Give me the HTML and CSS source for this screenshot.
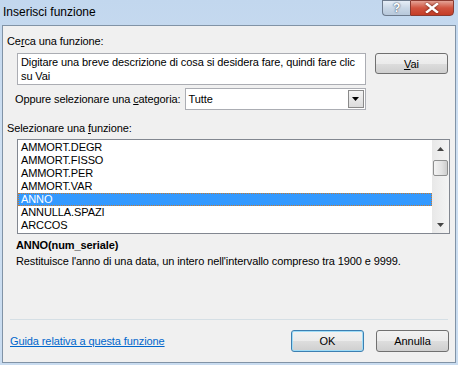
FILE: index.html
```html
<!DOCTYPE html>
<html lang="it">
<head>
    <meta charset="UTF-8">
    <title>Inserisci funzione</title>
    <link rel="stylesheet" href="styles.css">
</head>
<body>
    <div class="window">
        <div class="titlebar">
            <div class="title">Inserisci funzione</div>
            <div class="caption-buttons">
                <div class="cap-btn help">?</div>
                <div class="cap-btn close">
                    <svg width="14" height="10" viewBox="0 0 14 10">
                        <path d="M2 1 L12 9 M12 1 L2 9" stroke="#fff" stroke-width="2.4" stroke-linecap="square"/>
                    </svg>
                </div>
            </div>
        </div>

        <div class="panel">
            <div class="label">Ce<u>r</u>ca una funzione:</div>
            <div class="search-row">
                <div class="textbox">Digitare una breve descrizione di cosa si desidera fare, quindi fare clic su Vai</div>
                <button class="button vai"><u>V</u>ai</button>
            </div>

            <div class="category-row">
                <span class="cat-label">Oppure selezionare una <u>c</u>ategoria:</span>
                <div class="select">
                    <span class="select-value">Tutte</span>
                    <span class="select-arrow">
                        <svg width="7" height="4" viewBox="0 0 7 4"><path d="M0 0 H7 L3.5 4 Z" fill="#000"/></svg>
                    </span>
                </div>
            </div>

            <div class="label fn-label">Selezionare una <u>f</u>unzione:</div>
            <div class="listbox">
                <div class="items">
                    <div class="item">AMMORT.DEGR</div>
                    <div class="item">AMMORT.FISSO</div>
                    <div class="item">AMMORT.PER</div>
                    <div class="item">AMMORT.VAR</div>
                    <div class="item selected">ANNO</div>
                    <div class="item">ANNULLA.SPAZI</div>
                    <div class="item">ARCCOS</div>
                </div>
                <div class="scrollbar">
                    <div class="sb-arrow">
                        <svg width="7" height="4" viewBox="0 0 7 4"><path d="M0 4 H7 L3.5 0 Z" fill="#444"/></svg>
                    </div>
                    <div class="sb-track">
                        <div class="sb-thumb"></div>
                    </div>
                    <div class="sb-arrow">
                        <svg width="7" height="4" viewBox="0 0 7 4"><path d="M0 0 H7 L3.5 4 Z" fill="#444"/></svg>
                    </div>
                </div>
            </div>

            <div class="signature">ANNO(num_seriale)</div>
            <div class="description">Restituisce l'anno di una data, un intero nell'intervallo compreso tra 1900 e 9999.</div>

            <div class="separator"></div>
            <div class="footer">
                <a href="#" class="help-link">Guida relativa a questa funzione</a>
                <div class="footer-buttons">
                    <button class="button ok">OK</button>
                    <button class="button">Annulla</button>
                </div>
            </div>
        </div>
    </div>
</body>
</html>
```

FILE: styles.css
```css
body {
    margin: 0;
    font-family: "Liberation Sans", Arial, sans-serif;
    font-size: 11px;
    letter-spacing: -0.1px;
    color: #000000;
}
.window {
    width: 458px;
    height: 365px;
    display: flex;
    flex-direction: column;
    background: linear-gradient(to bottom, #c2d7ee, #cfe0f2 40%, #c9dcf0);
    box-sizing: border-box;
}
.titlebar {
    height: 25px;
    display: flex;
    justify-content: space-between;
    align-items: flex-start;
}
.title {
    font-size: 12px;
    letter-spacing: 0;
    padding-left: 3px;
    margin-top: 5px;
    color: #000000;
}
.caption-buttons {
    display: flex;
    margin-right: 4px;
}
.cap-btn {
    height: 16px;
    box-sizing: border-box;
    border: 1px solid #6d7b8d;
    display: flex;
    align-items: center;
    justify-content: center;
}
.help {
    width: 28px;
    border-right: none;
    border-radius: 0 0 0 4px;
    background: linear-gradient(to bottom, #e6eef7, #c9d7e6 50%, #b7c8db);
    color: #ffffff;
    font-weight: bold;
    font-size: 12px;
    text-shadow: 0 0 2px #4a5a70, 0 0 1px #4a5a70;
}
.close {
    width: 44px;
    border-radius: 0 0 4px 0;
    border-color: #8a3a30;
    background: linear-gradient(to bottom, #e4a396, #d0533f 50%, #c43d27);
}
.close svg {
    filter: drop-shadow(0 0 1px #5a1a10);
}
.panel {
    flex: 1;
    margin: 0 2px 2px 2px;
    border: 1px solid #8193a6;
    background-color: #f0f0f0;
    padding: 0 5px 0 4px;
    display: flex;
    flex-direction: column;
}
.label {
    margin-top: 8px;
    height: 14px;
    line-height: 14px;
}
.search-row {
    display: flex;
    align-items: flex-start;
    margin-top: 5px;
    padding-left: 10px;
}
.textbox {
    width: 349px;
    height: 32px;
    box-sizing: border-box;
    border: 1px solid #abadb3;
    background-color: #ffffff;
    padding: 1px 3px;
    line-height: 14px;
}
.button {
    font-family: "Liberation Sans", Arial, sans-serif;
    font-size: 11px;
    width: 73px;
    height: 22px;
    border: 1px solid #707070;
    border-radius: 3px;
    background: linear-gradient(to bottom, #f2f2f2, #ebebeb 50%, #dddddd 51%, #cfcfcf);
    padding: 0;
    color: #000000;
}
.vai {
    margin-left: 9px;
    height: 21px;
}
.category-row {
    display: flex;
    align-items: center;
    margin-top: 3px;
    padding-left: 8px;
}
.cat-label {
    margin-right: 4px;
}
.select {
    width: 181px;
    height: 22px;
    box-sizing: border-box;
    border: 1px solid #abadb3;
    background-color: #ffffff;
    display: flex;
    align-items: center;
    justify-content: space-between;
}
.select-value {
    padding-left: 3px;
}
.select-arrow {
    width: 16px;
    height: 18px;
    margin-right: 1px;
    box-sizing: border-box;
    border: 1px solid #8a8a8a;
    background: linear-gradient(to bottom, #f4f4f4, #dcdcdc);
    display: flex;
    align-items: center;
    justify-content: center;
}
.fn-label {
    margin-top: 11px;
}
.listbox {
    margin: 4px 0 0 10px;
    width: 433px;
    height: 95px;
    box-sizing: border-box;
    border: 1px solid #828790;
    background-color: #ffffff;
    display: flex;
}
.items {
    flex: 1;
    padding-top: 1px;
}
.item {
    height: 13px;
    line-height: 13px;
    padding-left: 3px;
    box-sizing: border-box;
}
.item.selected {
    background-color: #3399ff;
    color: #ffffff;
    border: 1px dotted #c77b30;
    line-height: 11px;
    padding-left: 2px;
}
.scrollbar {
    width: 17px;
    display: flex;
    flex-direction: column;
    background: linear-gradient(to right, #e8e8e8, #f4f4f4);
}
.sb-arrow {
    height: 17px;
    display: flex;
    align-items: center;
    justify-content: center;
}
.sb-track {
    flex: 1;
}
.sb-thumb {
    margin: 3px 1px 0 1px;
    height: 14px;
    border: 1px solid #8e8f8f;
    border-radius: 2px;
    background: linear-gradient(to right, #f3f3f3, #e2e2e2 60%, #cdcdcd);
}
.signature {
    font-weight: bold;
    margin: 4px 0 0 9px;
    height: 14px;
    line-height: 14px;
}
.description {
    margin: 2px 0 0 9px;
    line-height: 14px;
}
.separator {
    margin: auto 2px 0 3px;
    height: 1px;
    background-color: #d5dfe5;
}
.footer {
    display: flex;
    justify-content: space-between;
    align-items: center;
    height: 42px;
}
.help-link {
    color: #0066cc;
    text-decoration: underline;
    padding-left: 3px;
}
.footer-buttons {
    display: flex;
    gap: 12px;
    margin-right: 1px;
}
.ok {
    border-color: #3c7fb1;
    box-shadow: inset 0 0 0 1px #9fdcf7;
}
```
